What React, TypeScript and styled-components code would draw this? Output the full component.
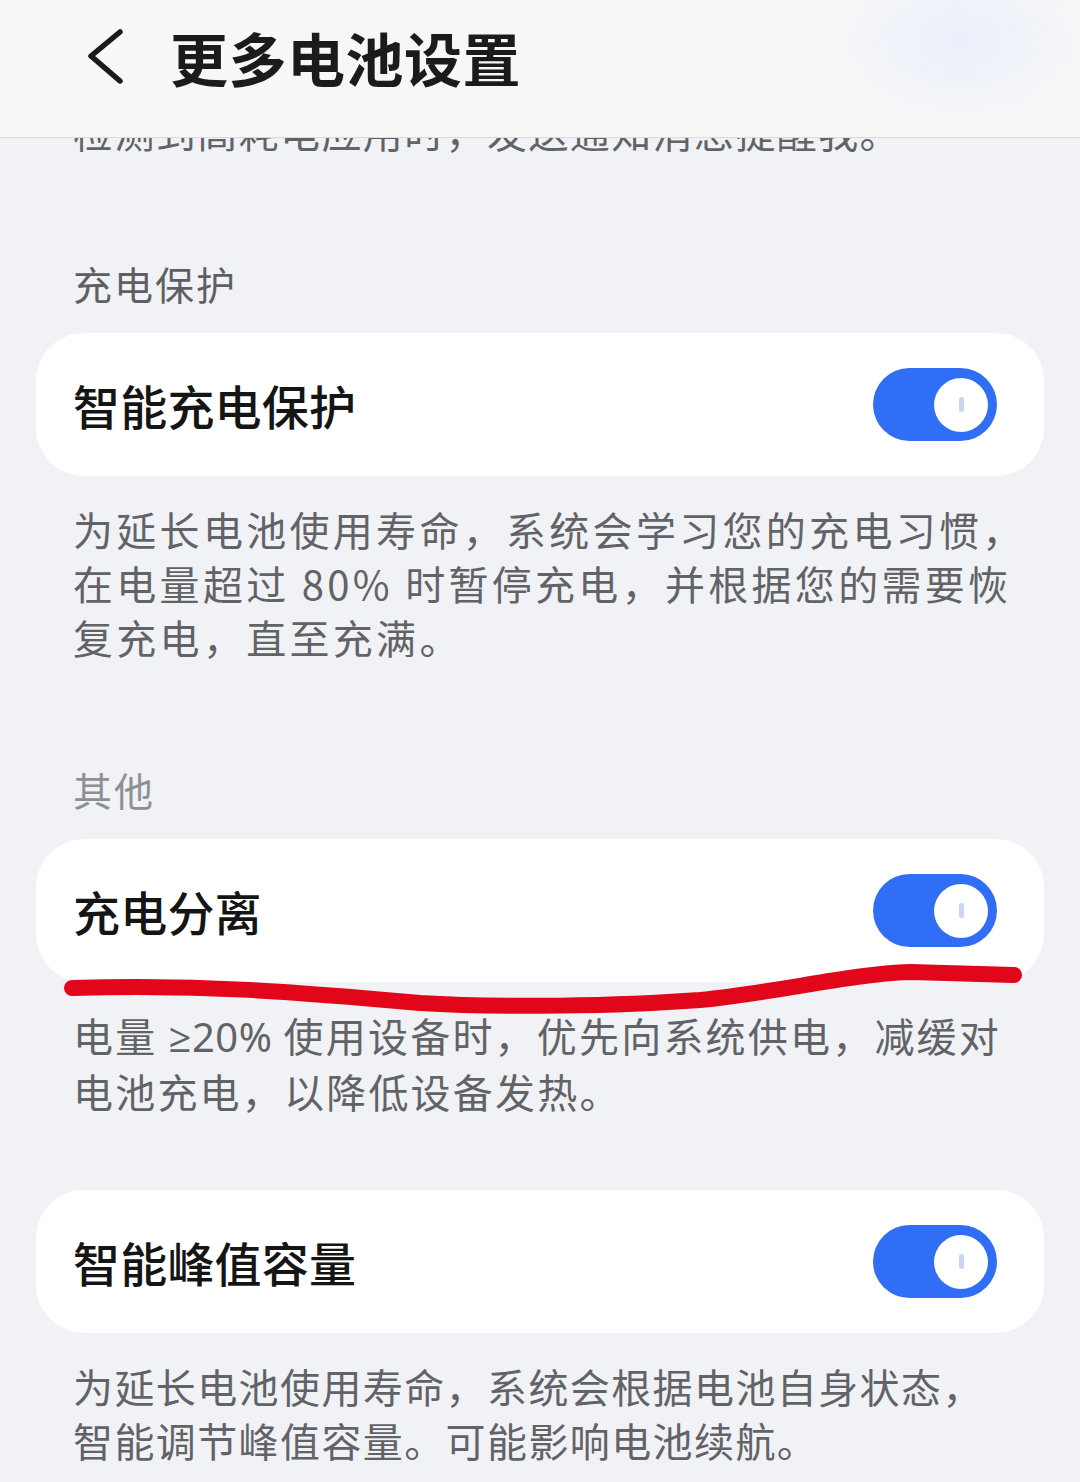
import React from "react";
import styled, { createGlobalStyle } from "styled-components";

const Global = createGlobalStyle`
  html, body {
    margin: 0;
    padding: 0;
    background: #f1f2f6;
    overflow: hidden;
  }
  body {
    font-family: "Noto Sans CJK SC", "Noto Sans", sans-serif;
  }
`;

const Screen = styled.div`
  position: relative;
  width: 1080px;
  height: 1482px;
  overflow: hidden;
  background: #f1f2f6;
`;

const Header = styled.header`
  position: absolute;
  top: 0;
  left: 0;
  right: 0;
  height: 138px;
  box-sizing: border-box;
  display: flex;
  align-items: center;
  gap: 42px;
  padding: 0 0 24px 86px;
  background:
    radial-gradient(ellipse 140px 90px at 960px 40px, rgba(232, 238, 250, 0.9), rgba(232, 238, 250, 0) 100%),
    #f7f7f7;
  border-bottom: 1px solid #dadada;
  z-index: 2;
`;

const BackButton = styled.button`
  display: flex;
  align-items: center;
  padding: 0;
  border: none;
  background: transparent;
  width: 42px;
  height: 56px;
`;

const Title = styled.h1`
  margin: 0;
  font-size: 58px;
  font-weight: 700;
  line-height: 1;
  color: #1b1b1b;
  letter-spacing: 0.5px;
`;

const Content = styled.main`
  display: flex;
  flex-direction: column;
  padding-top: 104px;
`;

const SectionTitle = styled.h2<{ $muted?: boolean }>`
  margin: 98px 0 23px;
  padding-left: 73px;
  font-size: 39px;
  font-weight: 400;
  line-height: 54px;
  letter-spacing: 2px;
  color: ${(p) => (p.$muted ? "#8e8f93" : "#5e5f63")};
`;

const Card = styled.div<{ $gap?: number }>`
  margin: ${(p) => p.$gap ?? 0}px 36px 0;
  height: 143px;
  box-sizing: border-box;
  padding: 0 47px 0 37px;
  display: flex;
  align-items: center;
  justify-content: space-between;
  background: #ffffff;
  border-radius: 48px;
`;

const CardTitle = styled.span`
  font-size: 47px;
  font-weight: 500;
  color: #151515;
  letter-spacing: 0.2px;
`;

const Switch = styled.div`
  position: relative;
  width: 124px;
  height: 73px;
  border-radius: 37px;
  background: #2f6ef5;
  display: flex;
  align-items: center;
  justify-content: flex-end;
  padding-right: 9px;
  box-sizing: border-box;
`;

const Knob = styled.div`
  width: 54px;
  height: 54px;
  border-radius: 50%;
  background: #ffffff;
  display: flex;
  align-items: center;
  justify-content: center;
`;

const KnobMark = styled.div`
  width: 5px;
  height: 15px;
  border-radius: 3px;
  background: #c9d6ef;
`;

const Desc = styled.p<{ $spacing: number; $top?: number }>`
  margin: ${(p) => p.$top ?? 26}px 0 0;
  padding-left: 73px;
  font-size: 40px;
  line-height: 54px;
  color: #626367;
  letter-spacing: ${(p) => p.$spacing}px;
  white-space: nowrap;
`;

const Line = styled.span`
  display: block;
`;

const Latin = styled.span`
  font-family: "Noto Sans", "Open Sans", sans-serif;
  letter-spacing: 0.5px;
`;

const Scribble = styled.svg`
  position: absolute;
  left: 0;
  top: 0;
  width: 1080px;
  height: 1482px;
  pointer-events: none;
  z-index: 1;
`;

const Toggle = () => (
  <Switch>
    <Knob>
      <KnobMark />
    </Knob>
  </Switch>
);

const Paragraph = ({ lines, spacing, top }: { lines: React.ReactNode[]; spacing: number; top?: number }) => (
  <Desc $spacing={spacing} $top={top}>
    {lines.map((l, i) => (
      <Line key={i}>{l}</Line>
    ))}
  </Desc>
);

export default function App() {
  return (
    <Screen>
      <Global />
      <Header>
        <BackButton aria-label="返回">
          <svg width="42" height="56" viewBox="0 0 42 56">
            <path d="M34 3 L5 27 L34 52" fill="none" stroke="#1b1b1b" strokeWidth="5.5" strokeLinecap="round" strokeLinejoin="round" />
          </svg>
        </BackButton>
        <Title>更多电池设置</Title>
      </Header>

      <Content>
        <Paragraph top={0} spacing={1.4} lines={["检测到高耗电应用时，发送通知消息提醒我。"]} />

        <SectionTitle>充电保护</SectionTitle>
        <Card>
          <CardTitle>智能充电保护</CardTitle>
          <Toggle />
        </Card>
        <Paragraph
          spacing={3.3}
          lines={[
            "为延长电池使用寿命，系统会学习您的充电习惯，",
            "在电量超过 80% 时暂停充电，并根据您的需要恢",
            "复充电，直至充满。",
          ]}
        />

        <SectionTitle $muted>其他</SectionTitle>
        <Card>
          <CardTitle>充电分离</CardTitle>
          <Toggle />
        </Card>
        <Paragraph
          spacing={2.2}
          lines={[
            <>
              电量 <Latin>≥20%</Latin> 使用设备时，优先向系统供电，减缓对
            </>,
            "电池充电，以降低设备发热。",
          ]}
        />

        <Card $gap={72}>
          <CardTitle>智能峰值容量</CardTitle>
          <Toggle />
        </Card>
        <Paragraph
          spacing={1.4}
          lines={["为延长电池使用寿命，系统会根据电池自身状态，", "智能调节峰值容量。可能影响电池续航。"]}
        />
      </Content>

      <Scribble viewBox="0 0 1080 1482">
        <path
          d="M72 988 C 200 984, 300 992, 420 1003 C 500 1008, 620 1006, 700 1000 C 780 992, 850 974, 910 972 L 1014 975"
          fill="none"
          stroke="#e1061a"
          strokeWidth="16"
          strokeLinecap="round"
          strokeLinejoin="round"
        />
      </Scribble>
    </Screen>
  );
}
